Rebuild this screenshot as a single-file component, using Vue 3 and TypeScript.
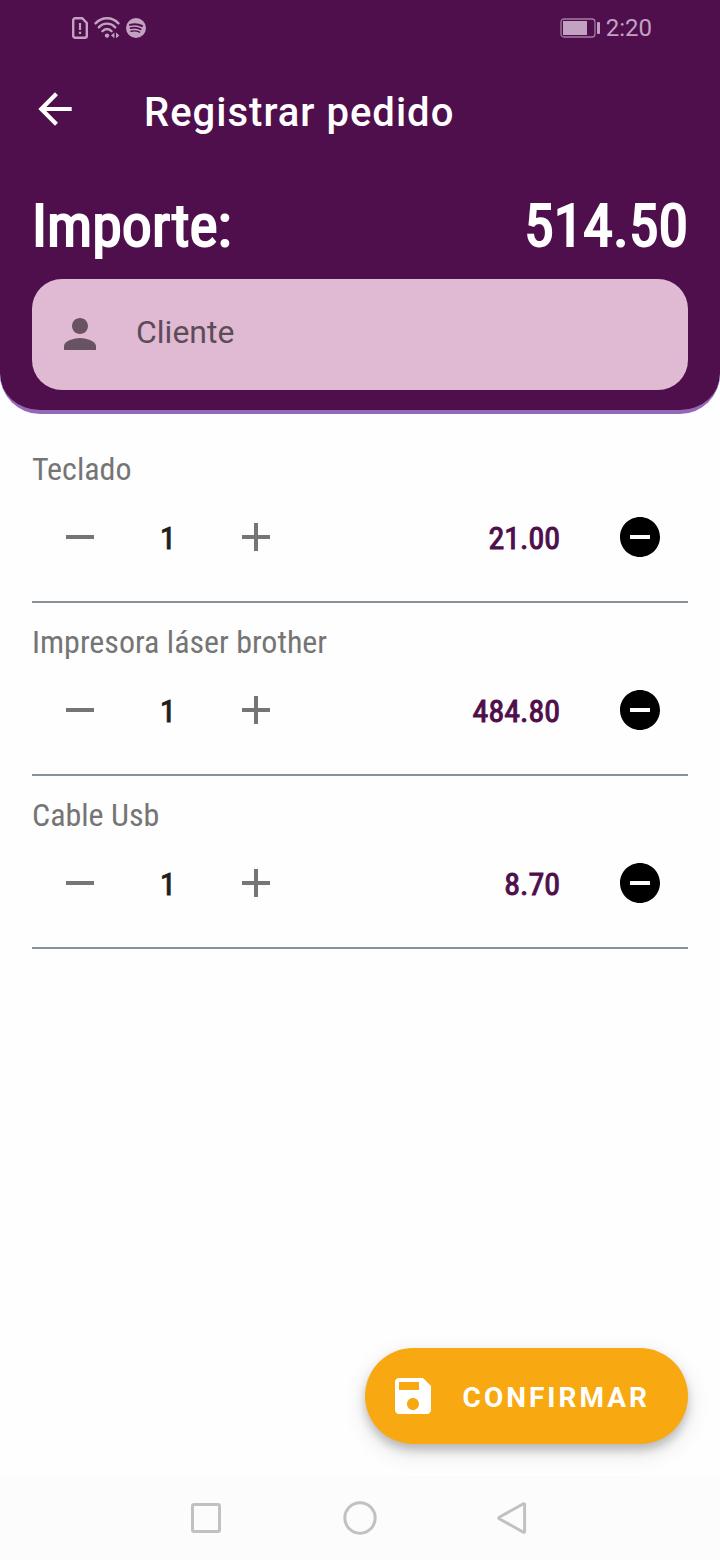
<script setup lang="ts">
import { computed, ref } from 'vue'

interface OrderLine {
  name: string
  quantity: number
  price: number
}

const client = ref('')
const lines = ref<OrderLine[]>([
  { name: 'Teclado', quantity: 1, price: 21 },
  { name: 'Impresora láser brother', quantity: 1, price: 484.8 },
  { name: 'Cable Usb', quantity: 1, price: 8.7 },
])

const total = computed(() =>
  lines.value.reduce((sum, line) => sum + line.quantity * line.price, 0),
)

function change(line: OrderLine, step: number) {
  line.quantity = Math.max(1, line.quantity + step)
}

function remove(index: number) {
  lines.value.splice(index, 1)
}
</script>

<template>
  <div class="screen">
    <header class="header">
      <div class="status">
        <div class="status-group">
          <svg class="sim" width="16" height="22" viewBox="0 0 16 22" aria-hidden="true">
            <path d="M3.200 1.200h7l4.600 4.800v12.800a2 2 0 0 1-2 2H3.200a2 2 0 0 1-2-2V3.200a2 2 0 0 1 2-2z" fill="none" stroke="currentColor" stroke-width="2.400" />
            <path d="M6.900 6h2.200v7H6.900zM6.900 14.800h2.200V17H6.900z" fill="currentColor" />
          </svg>
          <svg class="wifi" width="26" height="22" viewBox="0 0 26 22" aria-hidden="true">
            <g fill="none" stroke="currentColor" stroke-width="2.400" stroke-linecap="round">
              <path d="M1.600 6.400C7.600-.4 18.400-.4 24.400 6.400" />
              <path d="M4.800 10.400c4.400-5 12-5 16.400 0" />
              <path d="M8.400 14.200c2.600-3 6.600-3 9.200 0" />
            </g>
            <circle cx="13" cy="18.600" r="2.200" fill="currentColor" />
            <path d="M20.400 15.600v5.600l-3.400-2.800zM22 15.600v5.600l3.400-2.800z" fill="currentColor" />
          </svg>
          <svg class="music" width="20" height="20" viewBox="0 0 22 22" aria-hidden="true">
            <circle cx="11" cy="11" r="11" fill="currentColor" />
            <g fill="none" stroke="#4f0f4c" stroke-linecap="round">
              <path d="M4.400 7.600c4.600-1.300 9.400-.9 13.200 1.200" stroke-width="2.200" />
              <path d="M5 11.200c4-1.100 8-.7 11.200 1.200" stroke-width="1.900" />
              <path d="M5.600 14.600c3.400-.8 6.600-.5 9.200 1" stroke-width="1.600" />
            </g>
          </svg>
        </div>
        <div class="status-group">
          <svg width="40" height="20" viewBox="0 0 40 20" aria-hidden="true">
            <rect x="1" y="1" width="34" height="18" rx="3" fill="none" stroke="currentColor" stroke-width="1.300" opacity=".75" />
            <rect x="3" y="3" width="24" height="14" fill="currentColor" />
            <rect x="37" y="4" width="3" height="12" rx="1" fill="currentColor" />
          </svg>
          <time class="clock">2:20</time>
        </div>
      </div>

      <div class="toolbar">
        <button class="icon-button back" type="button" aria-label="Volver">
          <svg width="50" height="50" viewBox="0 0 24 24" aria-hidden="true">
            <path d="M20 11H7.830l5.590-5.590L12 4l-8 8 8 8 1.410-1.410L7.830 13H20v-2z" fill="currentColor" />
          </svg>
        </button>
        <h1 class="title">Registrar pedido</h1>
      </div>

      <div class="total">
        <span>Importe:</span>
        <span>{{ total.toFixed(2) }}</span>
      </div>

      <label class="field">
        <svg width="48" height="48" viewBox="0 0 24 24" aria-hidden="true">
          <path d="M12 12c2.210 0 4-1.790 4-4s-1.790-4-4-4-4 1.790-4 4 1.790 4 4 4zm0 2c-2.670 0-8 1.340-8 4v2h16v-2c0-2.660-5.330-4-8-4z" fill="currentColor" />
        </svg>
        <input v-model="client" class="input" type="text" placeholder="Cliente" aria-label="Cliente" />
      </label>
    </header>

    <main class="content">
      <ul class="lines">
        <li v-for="(line, index) in lines" :key="line.name" class="line">
          <h2 class="name">{{ line.name }}</h2>
          <div class="controls">
            <button class="icon-button step" type="button" aria-label="Restar" @click="change(line, -1)">
              <svg width="48" height="48" viewBox="0 0 24 24" aria-hidden="true">
                <path d="M19 13H5v-2h14v2z" fill="currentColor" />
              </svg>
            </button>
            <span class="quantity">{{ line.quantity }}</span>
            <button class="icon-button step" type="button" aria-label="Sumar" @click="change(line, 1)">
              <svg width="48" height="48" viewBox="0 0 24 24" aria-hidden="true">
                <path d="M19 13h-6v6h-2v-6H5v-2h6V5h2v6h6v2z" fill="currentColor" />
              </svg>
            </button>
            <span class="price">{{ (line.quantity * line.price).toFixed(2) }}</span>
            <button class="icon-button remove" type="button" aria-label="Quitar" @click="remove(index)">
              <svg width="48" height="48" viewBox="0 0 24 24" aria-hidden="true">
                <path d="M12 2C6.480 2 2 6.480 2 12s4.480 10 10 10 10-4.480 10-10S17.520 2 12 2zm5 11H7v-2h10v2z" fill="currentColor" />
              </svg>
            </button>
          </div>
        </li>
      </ul>

      <button class="confirm" type="button">
        <svg width="48" height="48" viewBox="0 0 24 24" aria-hidden="true">
          <path d="M17 3H5c-1.110 0-2 .9-2 2v14c0 1.100.89 2 2 2h14c1.100 0 2-.9 2-2V7l-4-4zm-5 16c-1.660 0-3-1.340-3-3s1.340-3 3-3 3 1.340 3 3-1.340 3-3 3zm3-10H5V5h10v4z" fill="currentColor" />
        </svg>
        <span class="confirm-label">CONFIRMAR</span>
      </button>
    </main>

    <nav class="system-nav">
      <button class="nav-button" type="button" aria-label="Recientes">
        <svg width="36" height="36" viewBox="0 0 36 36" aria-hidden="true">
          <rect x="4.500" y="4.500" width="27" height="27" rx="1.500" />
        </svg>
      </button>
      <button class="nav-button" type="button" aria-label="Inicio">
        <svg width="36" height="36" viewBox="0 0 36 36" aria-hidden="true">
          <circle cx="18" cy="18" r="15.200" />
        </svg>
      </button>
      <button class="nav-button" type="button" aria-label="Atrás">
        <svg width="36" height="36" viewBox="0 0 36 36" aria-hidden="true">
          <path d="M27.400 3.800a.8.8 0 0 1 1.200.7v27a.8.8 0 0 1-1.200.7L3.200 18.700a.8.8 0 0 1 0-1.400z" />
        </svg>
      </button>
    </nav>
  </div>
</template>

<style>
body {
  margin: 0;
  background: #fefefe;
}
</style>

<style scoped>
.screen {
  display: flex;
  flex-direction: column;
  min-height: 100vh;
  background: #fefefe;
  color: #1f1f1f;
  font-family: Roboto, "Liberation Sans", sans-serif;
}

.screen * {
  box-sizing: border-box;
}

svg {
  display: block;
  flex: none;
}

button {
  border: 0;
  padding: 0;
  background: none;
  color: inherit;
  font: inherit;
  cursor: pointer;
}

.header {
  padding: 0 32px 20px;
  border-bottom: 4px solid #9368b7;
  border-radius: 0 0 40px 40px;
  background: #4f0f4c;
  color: #fff;
}

.status {
  display: flex;
  justify-content: space-between;
  height: 56px;
  padding: 0 36px 0 40px;
  color: #c3a1c2;
}

.status-group {
  display: flex;
  align-items: center;
  gap: 6px;
}

.clock {
  font-size: 24px;
  line-height: 32px;
}

.toolbar {
  display: flex;
  align-items: center;
  gap: 64px;
  height: 106px;
  margin: 0 -2px;
}

.icon-button {
  display: flex;
  flex: none;
  align-items: center;
  justify-content: center;
}

.title {
  margin: 0;
  padding-top: 8px;
  font-size: 40px;
  font-weight: 500;
  line-height: 48px;
  letter-spacing: 1px;
}

.total {
  display: flex;
  justify-content: space-between;
  margin-bottom: 13px;
  padding-top: 24px;
  font-family: "Roboto Condensed", Roboto, sans-serif;
  font-size: 60px;
  font-weight: 400;
  line-height: 80px;
  -webkit-text-stroke: 2px currentColor;
}

.field {
  display: flex;
  align-items: center;
  gap: 32px;
  height: 111px;
  padding: 0 24px 1px;
  border-radius: 30px;
  background: #e0bad3;
  color: #695363;
}

.input {
  flex: 1;
  min-width: 0;
  height: 64px;
  padding: 0 0 4px;
  border: 0;
  outline: 0;
  background: none;
  color: #4b3a47;
  font-family: inherit;
  font-size: 32px;
}

.input::placeholder {
  color: #5e4b58;
  opacity: 1;
}

.content {
  display: flex;
  flex: 1;
  flex-direction: column;
  justify-content: space-between;
  padding: 16px 32px 32px;
}

.lines {
  margin: 0;
  padding: 0;
  list-style: none;
  font-family: "Roboto Condensed", Roboto, sans-serif;
}

.line {
  padding: 19px 0 16px;
  border-bottom: 2px solid #86919a;
}

.name {
  margin: 0;
  color: #757575;
  font-size: 32px;
  font-weight: 400;
  line-height: 40px;
}

.controls {
  display: flex;
  align-items: center;
  height: 96px;
  font-size: 32px;
  font-weight: 400;
  line-height: 40px;
}

.step,
.remove {
  width: 96px;
  height: 96px;
}

.step {
  color: #757575;
}

.remove {
  color: #000;
}

.quantity,
.price {
  padding-top: 2px;
  -webkit-text-stroke: 1px currentColor;
}

.quantity {
  width: 80px;
  text-align: center;
}

.price {
  flex: 1;
  padding-right: 32px;
  color: #4f0f4c;
  text-align: right;
}

.confirm {
  display: flex;
  align-items: center;
  align-self: flex-end;
  gap: 26px;
  height: 96px;
  padding: 0 38px 0 24px;
  border-radius: 48px;
  background: #f8a912;
  box-shadow: 0 6px 10px rgb(0 0 0 / 20%), 0 8px 24px rgb(0 0 0 / 12%);
  color: #fff;
  font-size: 28px;
  font-weight: 700;
  letter-spacing: 3px;
}

.confirm-label {
  padding-top: 2px;
}

.system-nav {
  display: flex;
  align-items: center;
  justify-content: center;
  gap: 70px;
  height: 84px;
  background: #fcfcfc;
}

.nav-button {
  display: flex;
  align-items: center;
  justify-content: center;
  width: 84px;
  height: 84px;
}

.nav-button svg {
  fill: none;
  stroke: #c1c1c1;
  stroke-width: 3;
}
</style>
